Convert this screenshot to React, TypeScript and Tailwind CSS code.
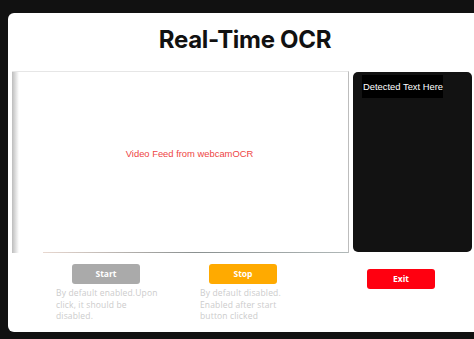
export default function App() {
  return (
    <div className="w-[474px] h-[339px] overflow-hidden bg-[#111111] pt-[13px] pl-[8px]">
      <div className="w-[474px] h-[319px] bg-white rounded-[6px] flex flex-col">
        <h1
          className="h-[58px] pt-[12px] text-center text-[24px] leading-[30px] font-bold text-[#111] tracking-[-0.3px]"
          style={{ fontFamily: "Inter, 'Noto Sans', sans-serif" }}
        >
          Real-Time OCR
        </h1>

        <div className="flex h-[182px]">
          <div className="ml-[4px] w-[337px] h-[182px] relative bg-white border-t border-[#e6e6e6] border-r border-r-[#bdbdbd] flex items-center justify-center">
            <div className="absolute left-0 top-0 bottom-0 w-[7px] bg-gradient-to-r from-[#bdbdbd] to-white" />
            <div className="absolute left-[31px] right-0 bottom-0 h-[1px] bg-gradient-to-r from-[#e8d8d0] via-[#8a9090] to-[#b0b8b8]" />
            <span
              className="text-[9.4px] text-[#ee4444] -mt-[16px] ml-[19px]"
              style={{ fontFamily: "'Liberation Sans', Arial, sans-serif" }}
            >
              Video Feed from webcamOCR
            </span>
          </div>
          <div className="ml-[4px] mt-[1px] w-[119px] h-[180px] bg-[#121212] rounded-[5px] pl-[9px] pt-[3px]">
            <div
              className="w-[81px] h-[23px] bg-black text-white text-[9.4px] leading-[23px] pl-[1px] whitespace-nowrap"
              style={{ fontFamily: "'Liberation Sans', Arial, sans-serif" }}
            >
              Detected Text Here
            </div>
          </div>
        </div>

        <div
          className="flex mt-[11px] pl-[48px]"
          style={{ fontFamily: "'Open Sans', 'Noto Sans', sans-serif" }}
        >
          <div className="w-[104px] flex flex-col">
            <button className="ml-[16px] w-[68px] h-[20px] rounded-[3px] bg-[#aaaaaa] text-white text-[8.5px] font-bold">
              Start
            </button>
            <p className="mt-[3px] text-[8.5px] leading-[11.5px] text-[#cccccc] tracking-[0.15px]">
              By default enabled.Upon click, it should be disabled.
            </p>
          </div>
          <div className="ml-[40px] w-[86px] flex flex-col">
            <button className="ml-[9px] w-[68px] h-[20px] rounded-[3px] bg-[#ffaa00] text-white text-[8.5px] font-bold">
              Stop
            </button>
            <p className="mt-[3px] text-[8.5px] leading-[11.5px] text-[#cccccc] tracking-[0.15px]">
              By default disabled. Enabled after start button clicked
            </p>
          </div>
          <div className="ml-[81px] w-[68px]">
            <button className="w-[68px] h-[20px] rounded-[3px] bg-[#ff0010] text-white text-[8.5px] font-bold">
              Exit
            </button>
          </div>
        </div>
      </div>
    </div>
  );
}
